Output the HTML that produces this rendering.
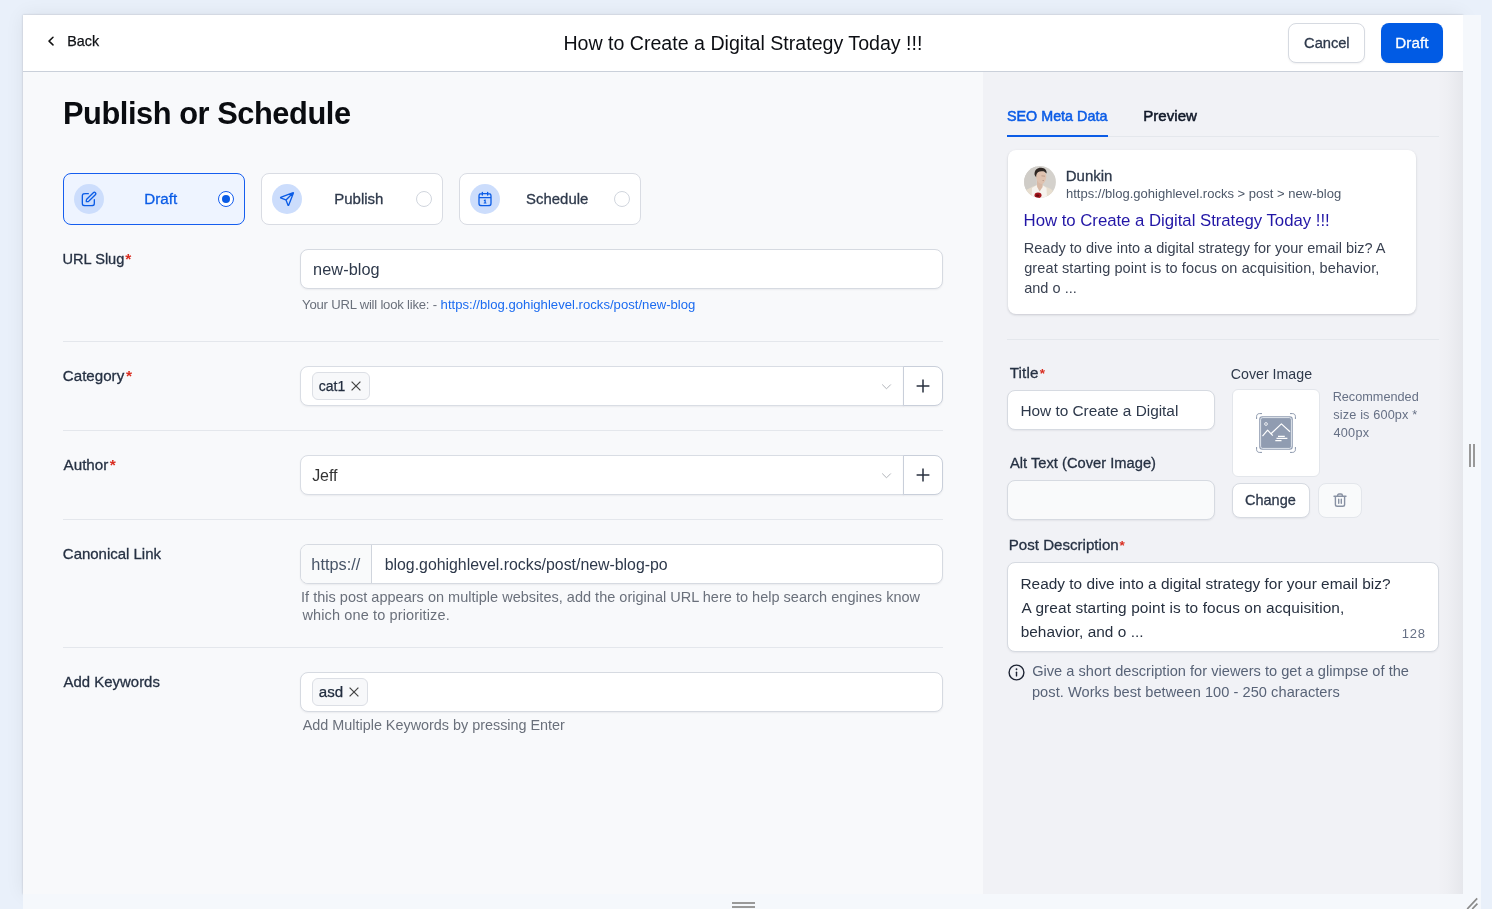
<!DOCTYPE html>
<html lang="en">
<head>
<meta charset="utf-8">
<title>Publish or Schedule</title>
<style>
*{box-sizing:border-box;margin:0;padding:0}
html,body{width:1492px;height:909px;overflow:hidden}
body{background:#e9f0fa;font-family:"Liberation Sans",sans-serif;color:#101828;position:relative}
.abs{position:absolute}
.t{position:absolute;display:block;white-space:nowrap;line-height:1;font-weight:400;will-change:transform}
.inp{border-radius:8px;border:1px solid #d6dae1;background:#fff;box-shadow:0 1px 2px rgba(16,24,40,.06)}
.hr{height:1px;background:#e4e7ec}
svg{position:absolute;overflow:visible}
</style>
</head>
<body>
<div class="abs" style="left:23px;top:15px;width:1440px;height:879px;box-shadow:0 0 18px 0 rgba(0,0,0,.07),0 0 2px .3px rgba(0,0,0,.2);background:#f9fafb"></div>
<div class="abs" style="left:1463px;top:15px;width:18px;height:894px;background:#f5f8fc"></div>
<div class="abs" style="left:23px;top:894px;width:1458px;height:15px;background:#f5f8fc"></div>
<div class="abs" style="left:23px;top:72px;width:960px;height:822px;background:#f8f9fb"></div>
<div class="abs" style="left:983px;top:72px;width:480px;height:822px;background:#f1f2f6"></div>
<div class="abs" style="left:1437px;top:72px;width:26px;height:822px;background:linear-gradient(to right,rgba(16,24,40,0),rgba(16,24,40,.012) 40%,rgba(16,24,40,.05))"></div>
<div class="abs" style="left:23px;top:15px;width:1440px;height:57px;background:#fff;border-bottom:1px solid #cad0da"></div>
<div class="abs" style="left:1469px;top:444px;width:2px;height:23px;background:#999"></div>
<div class="abs" style="left:1473px;top:444px;width:2px;height:23px;background:#999"></div>
<div class="abs" style="left:732px;top:902px;width:23px;height:2px;background:#999"></div>
<div class="abs" style="left:732px;top:905.5px;width:23px;height:2px;background:#999"></div>
<svg style="left:1465px;top:896px" width="14" height="13" viewBox="0 0 14 13"><path d="M2.2 13 L12.2 2.4 M7.2 13 L12.4 7.6" stroke="#8a8a8a" stroke-width="1.7" fill="none"/></svg>
<header>
<svg style="left:46px;top:35px" width="10" height="12" viewBox="0 0 10 12"><path d="M7 2.300 L3 6.100 L7 9.900" stroke="#111" stroke-width="1.5" fill="none" stroke-linecap="round" stroke-linejoin="round"/></svg>
<div class="t" style="left:67px;padding-left:0.23px;top:34px;font-size:14.3px;color:#0f1115;letter-spacing:0.021px;-webkit-text-stroke:0.25px #0f1115;">Back</div>
<div class="t" style="left:563px;padding-left:0.39px;top:34px;font-size:19.6px;color:#0c0e13;">How to Create a Digital Strategy Today !!!</div>
<div class="abs inp" style="left:1288px;top:23px;width:77px;height:40px;"></div>
<div class="t" style="left:1304px;padding-left:0.05px;top:36px;font-size:14.7px;color:#2e394b;letter-spacing:-0.026px;-webkit-text-stroke:0.30px #2e394b;">Cancel</div>
<div class="abs" style="left:1381px;top:23px;width:62px;height:40px;background:#015be4;border-radius:8px;box-shadow:0 1px 2px rgba(16,24,40,.06)"></div>
<div class="t" style="left:1395px;padding-left:0.25px;top:35px;font-size:15.2px;color:#fff;letter-spacing:0.105px;-webkit-text-stroke:0.30px #fff;">Draft</div>
</header>
<main>
<h1 class="t" style="left:62px;padding-left:0.94px;top:99px;font-size:30.8px;color:#0a0c10;letter-spacing:-0.442px;font-weight:700;">Publish or Schedule</h1>
<div class="abs" style="left:63px;top:173px;width:182px;height:52px;background:#eef4ff;border:1px solid #155eef;border-radius:8px"></div>
<div class="abs" style="left:261px;top:173px;width:182px;height:52px;background:#fff;border:1px solid #d9dce3;border-radius:8px"></div>
<div class="abs" style="left:459px;top:173px;width:182px;height:52px;background:#fff;border:1px solid #d9dce3;border-radius:8px"></div>
<div class="abs" style="left:74px;top:184px;width:30px;height:30px;background:#ccddfc;border-radius:50%"></div>
<div class="abs" style="left:272px;top:184px;width:30px;height:30px;background:#ccddfc;border-radius:50%"></div>
<div class="abs" style="left:470px;top:184px;width:30px;height:30px;background:#ccddfc;border-radius:50%"></div>
<div class="t" style="left:144px;padding-left:0.25px;top:191px;font-size:15.2px;color:#0b5ce6;-webkit-text-stroke:0.30px #0b5ce6;">Draft</div>
<div class="t" style="left:334px;padding-left:0.27px;top:191px;font-size:15.0px;color:#2e394b;-webkit-text-stroke:0.30px #2e394b;">Publish</div>
<div class="t" style="left:526px;padding-left:0.12px;top:192px;font-size:14.9px;color:#2e394b;letter-spacing:0.015px;-webkit-text-stroke:0.30px #2e394b;">Schedule</div>
<div class="abs" style="left:218px;top:191px;width:16px;height:16px;border:1.3px solid #155eef;border-radius:50%;background:#fff"></div>
<div class="abs" style="left:222px;top:195px;width:8px;height:8px;border-radius:50%;background:#0b5ce6"></div>
<div class="abs" style="left:416px;top:191px;width:16px;height:16px;border:1px solid #d0d5dd;border-radius:50%;background:#fff"></div>
<div class="abs" style="left:614px;top:191px;width:16px;height:16px;border:1px solid #d0d5dd;border-radius:50%;background:#fff"></div>
<svg style="left:81px;top:191px" width="16" height="16" viewBox="0 0 24 24" fill="none" stroke="#0b5ce6" stroke-width="2" stroke-linecap="round" stroke-linejoin="round"><path d="M11 4H6.8C5.12 4 4.28 4 3.64 4.33a3 3 0 0 0-1.31 1.31C2 6.28 2 7.12 2 8.8v8.4c0 1.68 0 2.52.33 3.16a3 3 0 0 0 1.31 1.31C4.28 22 5.12 22 6.8 22h8.4c1.68 0 2.52 0 3.16-.33a3 3 0 0 0 1.31-1.31C20 19.72 20 18.88 20 17.2V13"/><path d="M8 16h1.67c.49 0 .74 0 .97-.06.2-.05.4-.13.58-.24.2-.12.37-.3.72-.64L21.5 5.5a2.12 2.12 0 0 0-3-3L8.94 12.06c-.35.35-.52.52-.64.72-.11.18-.2.38-.24.58-.06.23-.06.48-.06.97V16z"/></svg>
<svg style="left:279px;top:191px" width="16" height="16" viewBox="0 0 24 24" fill="none" stroke="#0b5ce6" stroke-width="2" stroke-linecap="round" stroke-linejoin="round"><path d="M10.5 13.5L21 3M10.63 13.83l2.63 6.76c.23.6.35.89.51.98.15.08.32.08.47 0 .17-.09.29-.38.53-.97L21.36 3.7c.22-.54.33-.8.27-.98a.5.5 0 0 0-.32-.32c-.17-.06-.44.05-.98.27L3.4 9.24c-.59.24-.88.36-.97.53a.5.5 0 0 0 0 .47c.09.16.39.28.98.51l6.76 2.63c.12.05.18.07.23.11.05.03.09.07.12.12.04.05.06.11.11.22z"/></svg>
<svg style="left:477px;top:191px" width="16" height="16" viewBox="0 0 24 24" fill="none" stroke="#0b5ce6" stroke-width="2" stroke-linecap="round" stroke-linejoin="round"><path d="M21 10H3M16 2v4M8 2v4M7.8 22h8.4c1.68 0 2.52 0 3.16-.33a3 3 0 0 0 1.31-1.31C21 19.72 21 18.88 21 17.2V8.8c0-1.68 0-2.52-.33-3.16a3 3 0 0 0-1.31-1.31C18.72 4 17.88 4 16.2 4H7.8c-1.68 0-2.52 0-3.16.33a3 3 0 0 0-1.31 1.31C3 6.28 3 7.12 3 8.8v8.4c0 1.68 0 2.52.33 3.16a3 3 0 0 0 1.31 1.31C5.28 22 6.12 22 7.8 22z"/><path d="M11 14.2l1.2-.7V18M10.8 18h2.6" stroke-width="1.8"/></svg>
<label class="t" style="left:62px;padding-left:0.57px;top:252px;font-size:14.6px;color:#263143;letter-spacing:-0.025px;-webkit-text-stroke:0.30px #263143;">URL Slug</label>
<div class="t" style="left:125px;padding-left:0.15px;top:251px;font-size:15.5px;color:#d92d20;font-weight:700;">*</div>
<div class="abs inp" style="left:300px;top:249px;width:643px;height:40px;"></div>
<div class="t" style="left:313px;padding-left:0.12px;top:261px;font-size:16.3px;color:#2e394b;letter-spacing:0.070px;">new-blog</div>
<div class="t" style="left:302px;padding-left:0.11px;top:298px;font-size:13.1px;color:#6a707b;letter-spacing:-0.212px;">Your URL will look like: -</div>
<div class="t" style="left:440px;padding-left:0.59px;top:298px;font-size:13.1px;color:#1b6bf0;letter-spacing:0.017px;">https://blog.gohighlevel.rocks/post/new-blog</div>
<div class="abs hr" style="left:63px;top:341px;width:880px;height:1px;"></div>
<label class="t" style="left:62px;padding-left:0.83px;top:368px;font-size:15.1px;color:#263143;letter-spacing:0.018px;-webkit-text-stroke:0.30px #263143;">Category</label>
<div class="t" style="left:125px;padding-left:0.95px;top:368px;font-size:15.5px;color:#d92d20;font-weight:700;">*</div>
<div class="abs inp" style="left:300px;top:366px;width:604px;height:40px;border-radius:8px 0 0 8px;border-color:#d9dde4"></div>
<div class="abs inp" style="left:903px;top:366px;width:40px;height:40px;border-radius:0 8px 8px 0;border-color:#c9cfda"></div>
<div class="abs" style="left:312px;top:372px;width:58px;height:28px;border:1px solid #dcdfe5;border-radius:6px;background:#f7f8fa"></div>
<div class="t" style="left:318px;padding-left:0.71px;top:379px;font-size:14.0px;color:#222d3f;letter-spacing:0.005px;-webkit-text-stroke:0.25px #222d3f;">cat1</div>
<div class="abs hr" style="left:63px;top:430px;width:880px;height:1px;"></div>
<label class="t" style="left:63px;padding-left:0.57px;top:457px;font-size:15.2px;color:#263143;-webkit-text-stroke:0.30px #263143;">Author</label>
<div class="t" style="left:109px;padding-left:0.75px;top:457px;font-size:15.5px;color:#d92d20;font-weight:700;">*</div>
<div class="abs inp" style="left:300px;top:455px;width:604px;height:40px;border-radius:8px 0 0 8px;border-color:#d9dde4"></div>
<div class="abs inp" style="left:903px;top:455px;width:40px;height:40px;border-radius:0 8px 8px 0;border-color:#c9cfda"></div>
<div class="t" style="left:312px;padding-left:0.15px;top:468px;font-size:16.0px;color:#333;letter-spacing:-0.024px;">Jeff</div>
<div class="abs hr" style="left:63px;top:519px;width:880px;height:1px;"></div>
<svg style="left:880px;top:382px" width="13" height="10" viewBox="0 0 13 10"><path d="M2.2 2.5 L6.5 6.800 L10.800 2.500" stroke="#b0b3b9" stroke-width="1" fill="none"/></svg>
<svg style="left:915px;top:378px" width="16" height="16" viewBox="0 0 16 16"><path d="M8 1.6V14.4M1.6 8H14.4" stroke="#28303f" stroke-width="1.5" fill="none"/></svg>
<svg style="left:880px;top:471px" width="13" height="10" viewBox="0 0 13 10"><path d="M2.2 2.5 L6.5 6.800 L10.800 2.500" stroke="#b0b3b9" stroke-width="1" fill="none"/></svg>
<svg style="left:915px;top:467px" width="16" height="16" viewBox="0 0 16 16"><path d="M8 1.6V14.4M1.6 8H14.4" stroke="#28303f" stroke-width="1.5" fill="none"/></svg>
<label class="t" style="left:62px;padding-left:0.84px;top:546px;font-size:15.0px;color:#263143;letter-spacing:-0.020px;-webkit-text-stroke:0.30px #263143;">Canonical Link</label>
<div class="abs inp" style="left:300px;top:544px;width:643px;height:40px;"></div>
<div class="abs" style="left:301px;top:545px;width:71px;height:38px;background:#f9fafb;border-right:1px solid #d0d5dd;border-radius:7px 0 0 7px"></div>
<div class="t" style="left:311px;padding-left:0.37px;top:556px;font-size:16.3px;color:#475467;letter-spacing:0.015px;">https://</div>
<div class="t" style="left:384px;padding-left:0.68px;top:557px;font-size:15.9px;color:#2e394b;letter-spacing:-0.014px;">blog.gohighlevel.rocks/post/new-blog-po</div>
<div class="t" style="left:301px;padding-left:0.06px;top:590px;font-size:14.5px;color:#6a707b;letter-spacing:0.014px;">If this post appears on multiple websites, add the original URL here to help search engines know</div>
<div class="t" style="left:302px;padding-left:0.42px;top:608px;font-size:14.5px;color:#6a707b;letter-spacing:0.132px;">which one to prioritize.</div>
<div class="abs hr" style="left:63px;top:647px;width:880px;height:1px;"></div>
<label class="t" style="left:63px;padding-left:0.57px;top:675px;font-size:14.9px;color:#263143;letter-spacing:0.027px;-webkit-text-stroke:0.30px #263143;">Add Keywords</label>
<div class="abs inp" style="left:300px;top:672px;width:643px;height:40px;"></div>
<div class="abs" style="left:312px;top:678px;width:56px;height:28px;border:1px solid #dcdfe5;border-radius:6px;background:#f7f8fa"></div>
<div class="t" style="left:318px;padding-left:0.66px;top:684px;font-size:15.1px;color:#222d3f;letter-spacing:0.085px;-webkit-text-stroke:0.25px #222d3f;">asd</div>
<div class="t" style="left:302px;padding-left:0.77px;top:718px;font-size:14.4px;color:#6a707b;letter-spacing:-0.007px;">Add Multiple Keywords by pressing Enter</div>
<svg style="left:350.5px;top:381px" width="10" height="10" viewBox="0 0 10 10"><path d="M.6 .6 L9.4 9.4 M9.4 .6 L.6 9.4" stroke="#454545" stroke-width="1.25" fill="none"/></svg>
<svg style="left:348.7px;top:687px" width="10" height="10" viewBox="0 0 10 10"><path d="M.6 .6 L9.4 9.4 M9.4 .6 L.6 9.4" stroke="#454545" stroke-width="1.25" fill="none"/></svg>
</main>
<aside>
<div class="abs" style="left:1007px;top:136px;width:432px;height:1px;background:#e4e7ec"></div>
<div class="abs" style="left:1007px;top:135px;width:101px;height:2px;background:#0b5ce6"></div>
<div class="t" style="left:1006px;padding-left:0.95px;top:109px;font-size:14.3px;color:#0b5ce6;letter-spacing:0.026px;-webkit-text-stroke:0.50px #0b5ce6;">SEO Meta Data</div>
<div class="t" style="left:1143px;padding-left:0.26px;top:108px;font-size:15.1px;color:#101828;-webkit-text-stroke:0.50px #101828;">Preview</div>
<div class="abs" style="left:1008px;top:150px;width:408px;height:164px;background:#fff;border-radius:8px;box-shadow:0 1px 3px rgba(16,24,40,.12),0 1px 2px rgba(16,24,40,.06)"></div>
<svg style="left:1024px;top:166px" width="32" height="32" viewBox="0 0 32 32"><defs><clipPath id="av"><circle cx="16" cy="16" r="15.9"/></clipPath><filter id="avb" x="-10%" y="-10%" width="120%" height="120%"><feGaussianBlur stdDeviation=".55"/></filter></defs><g clip-path="url(#av)"><rect width="32" height="32" fill="#d4d1cc"/><g filter="url(#avb)"><rect x="-2" y="-2" width="14" height="36" fill="#cfccc7"/><path d="M-1 33 L2 24 L9 20.500 L13 19 L19 19.500 L27 23 L31 27 L33 33Z" fill="#e7decf"/><path d="M7.500 33 L8 22 L12.500 19.200 L15.500 24 L19 19.500 L22.500 22 L23 33Z" fill="#f6f3ee"/><path d="M12.800 14 L13.200 21 L15.600 25.500 L18.600 21 L18.400 16Z" fill="#d8b9a5"/><path d="M10.600 9 C10 4 13.500 1.600 17.200 1.800 C21 2 23 4.500 22.600 7.500 L20 5.500 L14.500 6.500 L12.300 11.500Z" fill="#2d2723"/><path d="M12.200 9.500 C12.500 6.500 15 5 18.200 5.200 C21.200 5.500 22.600 8 22.300 11 C22 14.500 20 18 17.800 18 C15.500 18 13 15.500 12.300 12.500Z" fill="#dfc2af"/><path d="M17.500 9.800 L21 10.200 M18.500 14.500 L20 14.600" stroke="#8a6a5c" stroke-width=".7" opacity=".6"/><ellipse cx="14" cy="29.200" rx="3.500" ry="2.800" fill="#a3141b"/><ellipse cx="13.600" cy="29.600" rx="1.600" ry="1.200" fill="#650b10"/></g></g></svg>
<div class="t" style="left:1065px;padding-left:0.67px;top:168px;font-size:15.0px;color:#2e394b;letter-spacing:0.023px;-webkit-text-stroke:0.30px #2e394b;">Dunkin</div>
<div class="t" style="left:1065px;padding-left:1.00px;top:187px;font-size:13.0px;color:#4d5869;letter-spacing:0.011px;">https://blog.gohighlevel.rocks &gt; post &gt; new-blog</div>
<div class="t" style="left:1023px;padding-left:0.62px;top:213px;font-size:16.8px;color:#2216a6;letter-spacing:-0.035px;">How to Create a Digital Strategy Today !!!</div>
<div class="t" style="left:1023px;padding-left:0.81px;top:241px;font-size:14.5px;color:#3a4252;letter-spacing:0.011px;">Ready to dive into a digital strategy for your email biz? A</div>
<div class="t" style="left:1024px;padding-left:0.19px;top:261px;font-size:14.5px;color:#3a4252;letter-spacing:0.107px;">great starting point is to focus on acquisition, behavior,</div>
<div class="t" style="left:1024px;padding-left:0.18px;top:281px;font-size:14.5px;color:#3a4252;letter-spacing:0.030px;">and o ...</div>
<div class="abs" style="left:1007px;top:339px;width:432px;height:1px;background:#e4e7ec"></div>
<label class="t" style="left:1009px;padding-left:0.66px;top:365px;font-size:15.2px;color:#263143;letter-spacing:0.166px;-webkit-text-stroke:0.30px #263143;">Title</label>
<div class="t" style="left:1039px;padding-left:0.86px;top:367px;font-size:13.5px;color:#d92d20;font-weight:700;">*</div>
<div class="abs inp" style="left:1007px;top:390px;width:208px;height:40px;"></div>
<div class="t" style="left:1020px;padding-left:0.44px;top:403px;font-size:15.4px;color:#2e394b;letter-spacing:-0.016px;">How to Create a Digital</div>
<label class="t" style="left:1230px;padding-left:0.78px;top:367px;font-size:14.2px;color:#2e394b;letter-spacing:0.006px;">Cover Image</label>
<div class="abs" style="left:1232px;top:389px;width:88px;height:88px;background:#fff;border-radius:6px;border:1px solid #e3e6eb"></div>
<div class="t" style="left:1332px;padding-left:0.66px;top:391px;font-size:12.7px;color:#667085;">Recommended</div>
<div class="t" style="left:1333px;padding-left:0.35px;top:409px;font-size:12.7px;color:#667085;letter-spacing:0.140px;">size is 600px *</div>
<div class="t" style="left:1333px;padding-left:0.41px;top:427px;font-size:12.7px;color:#667085;letter-spacing:0.281px;">400px</div>
<label class="t" style="left:1009px;padding-left:0.97px;top:456px;font-size:14.7px;color:#263143;letter-spacing:0.009px;-webkit-text-stroke:0.30px #263143;">Alt Text (Cover Image)</label>
<div class="abs inp" style="left:1007px;top:480px;width:208px;height:40px;background:#f9fafb"></div>
<div class="abs inp" style="left:1232px;top:483px;width:78px;height:35px;"></div>
<div class="t" style="left:1244px;padding-left:0.96px;top:493px;font-size:14.5px;color:#2e394b;letter-spacing:0.018px;-webkit-text-stroke:0.30px #2e394b;">Change</div>
<div class="abs" style="left:1318px;top:483px;width:44px;height:35px;background:#f9fafb;border:1px solid #e3e6eb;border-radius:8px"></div>
<svg style="left:1333px;top:493px" width="14" height="14" viewBox="0 0 14 14" fill="none" stroke="#8891a3" stroke-width="1.4" stroke-linecap="round" stroke-linejoin="round"><path d="M1 3.3H13M4.6 3.3V2.4C4.6 1.6 5.2 1 6 1H8C8.8 1 9.4 1.6 9.4 2.4V3.3M2.4 3.3V11.4C2.4 12.4 3.2 13.2 4.2 13.2H9.8C10.8 13.2 11.6 12.4 11.6 11.4V3.3M5.7 6.3V10.2M8.3 6.3V10.2"/></svg>
<svg style="left:1256px;top:412.6px" width="40" height="40" viewBox="0 0 40 40" fill="none"><rect x="3.2" y="3.2" width="33.6" height="33.6" rx="3" fill="#909cb1"/><rect x="4.6" y="4.6" width="30.8" height="30.8" rx="2" stroke="#e9edf3" stroke-width=".9"/><path d="M.6 6V3.4C.6 1.8 1.8.6 3.4.6H6M34 .6H36.600C38.200.6 39.400 1.800 39.400 3.400V6M39.400 34V36.600C39.400 38.200 38.200 39.400 36.600 39.400H34M6 39.400H3.400C1.800 39.400.6 38.200.6 36.600V34" stroke="#8995aa" stroke-width="1"/><circle cx="10" cy="11" r="1.4" stroke="#fff" stroke-width=".8"/><path d="M6.5 23.200L11.600 17.200L16.800 22.600M15 20.800L25.400 10.900L34 18.800" stroke="#fff" stroke-width="1.2" stroke-linejoin="round"/><path d="M22 23.400H28.800M20.500 25.400H31.400M19.300 27.600H25.500" stroke="#fff" stroke-width="1.1"/></svg>
<label class="t" style="left:1008px;padding-left:0.76px;top:537px;font-size:15.1px;color:#263143;letter-spacing:0.005px;-webkit-text-stroke:0.30px #263143;">Post Description</label>
<div class="t" style="left:1119px;padding-left:0.56px;top:539px;font-size:13.5px;color:#d92d20;font-weight:700;">*</div>
<div class="abs inp" style="left:1007px;top:562px;width:432px;height:90px;"></div>
<div class="t" style="left:1020px;padding-left:0.44px;top:576px;font-size:15.4px;color:#27303f;letter-spacing:0.008px;">Ready to dive into a digital strategy for your email biz?</div>
<div class="t" style="left:1021px;padding-left:0.47px;top:600px;font-size:15.4px;color:#27303f;letter-spacing:0.111px;">A great starting point is to focus on acquisition,</div>
<div class="t" style="left:1020px;padding-left:0.71px;top:624px;font-size:15.4px;color:#27303f;letter-spacing:0.026px;">behavior, and o ...</div>
<div class="t" style="left:1401px;padding-left:0.81px;top:627px;font-size:13.0px;color:#667085;letter-spacing:0.783px;">128</div>
<svg style="left:1007.6px;top:664.3px" width="17" height="17" viewBox="0 0 17 17" fill="none" stroke="#1d2433" stroke-width="1.4" stroke-linecap="round"><circle cx="8.500" cy="8.500" r="7.400"/><path d="M8.500 8.200V11.900"/><path d="M8.500 5.200V5.300" stroke-width="1.8"/></svg>
<div class="t" style="left:1032px;padding-left:0.17px;top:664px;font-size:14.6px;color:#586377;letter-spacing:0.021px;">Give a short description for viewers to get a glimpse of the</div>
<div class="t" style="left:1031px;padding-left:0.96px;top:685px;font-size:14.6px;color:#586377;letter-spacing:0.050px;">post. Works best between 100 - 250 characters</div>
</aside>
</body>
</html>
